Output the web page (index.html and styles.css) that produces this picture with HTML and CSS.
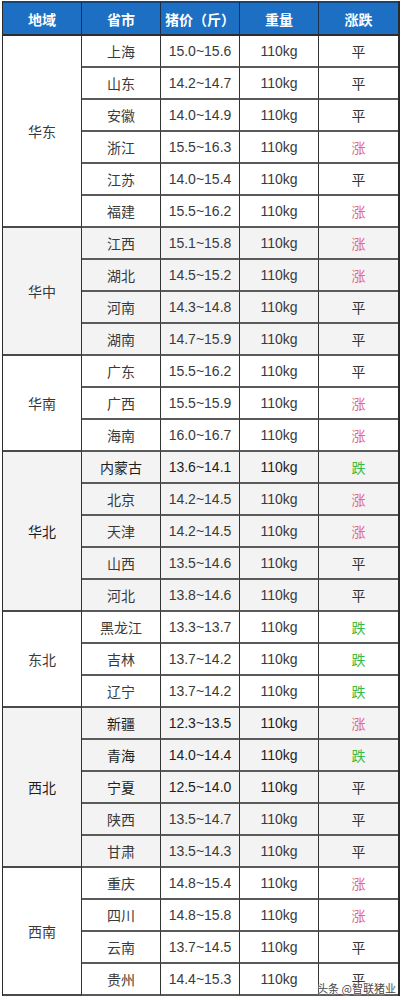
FILE: index.html
```html
<!DOCTYPE html>
<html lang="zh">
<head>
<meta charset="utf-8">
<link rel="stylesheet" href="styles.css">
</head>
<body>
<div class="wrap">
<table class="price">
<colgroup><col class="c1"><col class="c2"><col class="c3"><col class="c4"><col class="c5"></colgroup>
<thead>
<tr><th>地域</th><th>省市</th><th>猪价（斤）</th><th>重量</th><th>涨跌</th></tr>
</thead>
<tbody class="g-white">
<tr><td rowspan="6" class="region">华东</td><td>上海</td><td>15.0~15.6</td><td>110kg</td><td class="flat">平</td></tr>
<tr><td>山东</td><td>14.2~14.7</td><td>110kg</td><td class="flat">平</td></tr>
<tr><td>安徽</td><td>14.0~14.9</td><td>110kg</td><td class="flat">平</td></tr>
<tr><td>浙江</td><td>15.5~16.3</td><td>110kg</td><td class="up">涨</td></tr>
<tr><td>江苏</td><td>14.0~15.4</td><td>110kg</td><td class="flat">平</td></tr>
<tr><td>福建</td><td>15.5~16.2</td><td>110kg</td><td class="up">涨</td></tr>
</tbody>
<tbody class="g-gray">
<tr><td rowspan="4" class="region">华中</td><td>江西</td><td>15.1~15.8</td><td>110kg</td><td class="up">涨</td></tr>
<tr><td>湖北</td><td>14.5~15.2</td><td>110kg</td><td class="up">涨</td></tr>
<tr><td>河南</td><td>14.3~14.8</td><td>110kg</td><td class="flat">平</td></tr>
<tr><td>湖南</td><td>14.7~15.9</td><td>110kg</td><td class="flat">平</td></tr>
</tbody>
<tbody class="g-white">
<tr><td rowspan="3" class="region">华南</td><td>广东</td><td>15.5~16.2</td><td>110kg</td><td class="flat">平</td></tr>
<tr><td>广西</td><td>15.5~15.9</td><td>110kg</td><td class="up">涨</td></tr>
<tr><td>海南</td><td>16.0~16.7</td><td>110kg</td><td class="up">涨</td></tr>
</tbody>
<tbody class="g-gray">
<tr class="dark"><td rowspan="5" class="region">华北</td><td>内蒙古</td><td>13.6~14.1</td><td>110kg</td><td class="down">跌</td></tr>
<tr><td>北京</td><td>14.2~14.5</td><td>110kg</td><td class="up">涨</td></tr>
<tr><td>天津</td><td>14.2~14.5</td><td>110kg</td><td class="up">涨</td></tr>
<tr><td>山西</td><td>13.5~14.6</td><td>110kg</td><td class="flat">平</td></tr>
<tr><td>河北</td><td>13.8~14.6</td><td>110kg</td><td class="flat">平</td></tr>
</tbody>
<tbody class="g-white">
<tr><td rowspan="3" class="region">东北</td><td>黑龙江</td><td>13.3~13.7</td><td>110kg</td><td class="down">跌</td></tr>
<tr><td>吉林</td><td>13.7~14.2</td><td>110kg</td><td class="down">跌</td></tr>
<tr><td>辽宁</td><td>13.7~14.2</td><td>110kg</td><td class="down">跌</td></tr>
</tbody>
<tbody class="g-gray">
<tr class="dark"><td rowspan="5" class="region">西北</td><td>新疆</td><td>12.3~13.5</td><td>110kg</td><td class="up">涨</td></tr>
<tr class="dark"><td>青海</td><td>14.0~14.4</td><td>110kg</td><td class="down">跌</td></tr>
<tr class="dark"><td>宁夏</td><td>12.5~14.0</td><td>110kg</td><td class="flat">平</td></tr>
<tr><td>陕西</td><td>13.5~14.7</td><td>110kg</td><td class="flat">平</td></tr>
<tr><td>甘肃</td><td>13.5~14.3</td><td>110kg</td><td class="flat">平</td></tr>
</tbody>
<tbody class="g-white">
<tr><td rowspan="4" class="region">西南</td><td>重庆</td><td>14.8~15.4</td><td>110kg</td><td class="up">涨</td></tr>
<tr><td>四川</td><td>14.8~15.8</td><td>110kg</td><td class="up">涨</td></tr>
<tr><td>云南</td><td>13.7~14.5</td><td>110kg</td><td class="flat">平</td></tr>
<tr><td>贵州</td><td>14.4~15.3</td><td>110kg</td><td class="flat">平</td></tr>
</tbody>
</table>
<div class="mark">头条 @智联猪业</div>
</div>
</body>
</html>
```

FILE: styles.css
```css
html, body {
  margin: 0;
  padding: 0;
  background: #fff;
}
.wrap {
  position: relative;
  padding: 1px 0 0 2px;
  width: 402px;
}
.price {
  border-collapse: separate;
  border-spacing: 0;
  table-layout: fixed;
  width: 398px;
  font-family: "Liberation Sans", "Noto Sans CJK SC", sans-serif;
  font-size: 14px;
  color: #3a3a3a;
  border-left: 1px solid #2b2b2b;
  border-right: 2px solid #2b2b2b;
}
.c1, .c2, .c3, .c4 { width: 79px; }
.price th, .price td {
  padding: 0;
  text-align: center;
  vertical-align: middle;
  border-right: 1px solid #333;
  border-bottom: 2px solid #5a5a5a;
}
.price th:last-child, .price td:last-child { border-right: none; }
.price thead tr { height: 35px; }
.price th {
  background: #1c6fc3;
  color: #fff;
  font-weight: bold;
  font-family: "Noto Sans CJK SC", sans-serif;
  font-size: 14px;
  border-top: 2px solid #14457a;
  border-bottom: 2px solid #2d2d2d;
  border-right: 1px solid #1b2f4a;
}
.price tbody tr { height: 32px; }
.g-gray td { background: #f3f3f3; }
.g-white td { background: #fff; }
.price td.region { border-bottom: 2px solid #4a4a4a; }
.dark td { color: #1e1e1e; }
.up { color: #e2698a !important; }
.down { color: #3dba3d !important; }
.flat { color: #333 !important; }
.mark {
  position: absolute;
  right: 8px;
  top: 982px;
  line-height: 12px;
  font-family: "Noto Sans CJK SC", sans-serif;
  font-size: 11px;
  color: #4a4a4a;
  text-shadow: 0 0 2px #fff, 0 0 2px #fff;
}
```
